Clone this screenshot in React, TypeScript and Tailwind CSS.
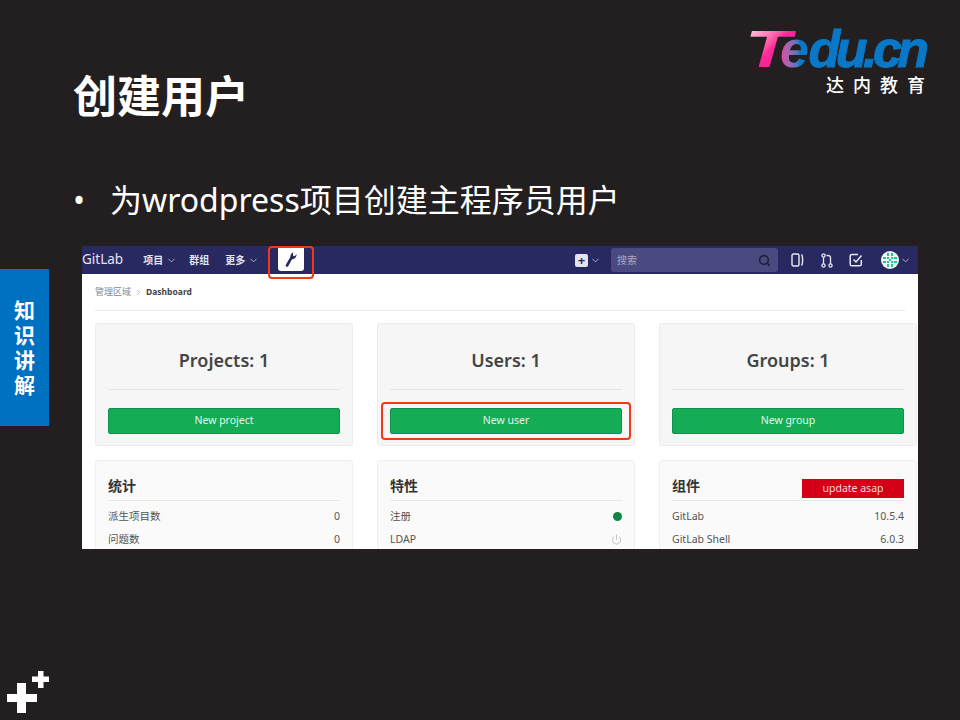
import { ChevronDown, ChevronRight, Power, Search } from "lucide-react";

const font = "font-['Noto_Sans','Noto_Sans_CJK_SC',sans-serif]";

// Top summary card (Projects / Users / Groups)
const CountCard = ({ title, action }: { title: string; action: string }) => (
  <div className="h-[123px] w-[258px] shrink-0 rounded-[3px] border border-[#ececec] bg-[#f6f6f6] px-3">
    <div className="flex h-[66px] items-center justify-center border-b border-[#e5e5e5] pt-[6px] text-[18px] font-semibold leading-none text-[#444]">
      {title}
    </div>
    <div className="mt-[18px] flex h-[26px] items-center justify-center rounded-[2px] border border-[#109150] bg-[#14ad55] text-[10.5px] text-[#e4f5ea]">
      {action}
    </div>
  </div>
);

const Row = ({ label, children }: { label: string; children: React.ReactNode }) => (
  <div className="flex h-[23px] items-center justify-between text-[10.5px] text-[#555]">
    <span>{label}</span>
    {children}
  </div>
);

const InfoCard = ({ title, badge, children }: { title: string; badge?: string; children: React.ReactNode }) => (
  <div className="h-[110px] w-[258px] shrink-0 rounded-[3px] border border-[#efefef] bg-[#fafafa] px-3">
    <div className="mt-[14px] flex h-[26px] items-end justify-between border-b border-[#e8e8e8] pb-[2px]">
      <span className="mb-[5px] text-[14px] font-bold leading-none text-[#333]">{title}</span>
      {badge && (
        <span className="flex h-[19px] w-[102px] items-center justify-center bg-[#d40018] text-[10.5px] text-[#f6d8da]">
          {badge}
        </span>
      )}
    </div>
    <div className="pt-[4px]">{children}</div>
  </div>
);

const Identicon = () => (
  <svg width="18" height="18" viewBox="0 0 18 18">
    <circle cx="9" cy="9" r="9" fill="#f1f5f3" />
    <path d="M6 2h2v3H6zM10 2h2v3h-2zM2 6h3v2H2zM13 6h3v2h-3zM2 10h3v2H2zM13 10h3v2h-3zM6 13h2v3H6zM10 13h2v3h-2zM6 6h2v2H6zM10 6h2v2h-2zM6 10h2v2H6zM10 10h2v2h-2zM8 8h2v2H8z" fill="#27c497" />
  </svg>
);

export default function App() {
  return (
    <div className={`relative h-[720px] w-[960px] overflow-hidden bg-[#231f20] ${font}`}>
      {/* Logo */}
      <div className="absolute left-[745px] top-[24px] w-[189px]">
        <div className="flex h-[50px] items-end font-['Liberation_Sans',sans-serif] text-[52px] font-bold italic leading-[50px] tracking-[-4.5px]">
          <span className="inline-block w-[35px] origin-left scale-x-[1.45] bg-gradient-to-br from-[#ffe6f3] via-[#ff2a9a] to-[#e0108a] bg-clip-text text-transparent">T</span>
          <span className="bg-gradient-to-r from-[#e83a9c] to-[#0a78c6] to-70% bg-clip-text pr-[4px] text-transparent">e</span>
          <span className="text-[#0a78c6] [-webkit-text-stroke:1px_#0a78c6]">du.cn</span>
        </div>
        <div className="mt-0 text-right text-[18px] font-medium leading-[22px] tracking-[9px] text-white">达内教育</div>
      </div>

      {/* Side tab */}
      <div className="absolute left-0 top-[269px] flex h-[157px] w-[49px] flex-col items-center justify-center bg-[#0070c0] text-[21px] font-bold leading-[25px] text-white">
        <span>知</span>
        <span>识</span>
        <span>讲</span>
        <span>解</span>
      </div>

      {/* Corner mark */}
      <svg className="absolute left-[7px] top-[671px]" width="42" height="42" viewBox="0 0 42 42">
        <path d="M10 12h9v11h11v8H19v11h-9V31H0v-8h10z" fill="#fff" />
        <path d="M31 0h5.500v5.500h5.500v5.500h-5.500v6h-5.500v-6h-6V5.500h6z" fill="#fff" />
      </svg>

      <div className="pl-[73px] pt-[66px]">
        <h1 className="text-[44px] font-bold leading-[60px] text-white">创建用户</h1>
        <div className="mt-[49px] flex h-[50px] items-center text-[32px] leading-none text-white">
          <span className="w-[37px]">•</span>
          <span>为wrodpress项目创建主程序员用户</span>
        </div>

        {/* GitLab admin screenshot */}
        <div className="relative ml-[9px] mt-[21px] h-[303px] w-[836px] overflow-hidden bg-white">
          <div className="flex h-[28px] items-center bg-[#292961] pr-[7px] text-[#e3e3ee]">
            <span className="text-[13.5px] leading-none">GitLab</span>
            <span className="ml-[20px] flex items-center gap-[3px] text-[10px] font-semibold">项目 <ChevronDown size={11} strokeWidth={1.5} /></span>
            <span className="ml-[12px] text-[10px] font-semibold">群组</span>
            <span className="ml-[16px] flex items-center gap-[3px] text-[10px] font-semibold">更多 <ChevronDown size={11} strokeWidth={1.5} /></span>
            <span className="ml-[19px] flex h-[25px] w-[26px] items-center justify-center self-start rounded-b-[3px] bg-white">
              <svg width="14" height="16" viewBox="0 0 14 16">
                <path d="M3 14.5 L7.2 7.2" stroke="#292961" strokeWidth="2.6" strokeLinecap="round" fill="none" />
                <path d="M6.4 7.6 C5.8 4.5 7 2.2 9.3 1.2 L8.9 4.6 L10.6 5.3 L12.6 3.2 C12.8 6 10.6 8.4 7.4 8.4 Z" fill="#292961" />
              </svg>
            </span>

            <span className="ml-auto flex h-[13px] w-[13px] items-center justify-center rounded-[2px] bg-[#e3e3f2] text-[13px] font-bold leading-none text-[#292961]">+</span>
            <ChevronDown className="ml-[2px]" size={11} strokeWidth={1.5} />
            <div className="ml-[10px] flex h-[24px] w-[167px] items-center justify-between rounded-[3px] bg-[#4a4a80] pl-[6px] pr-[7px] text-[10px] text-[#a9a9c8]">
              <span>搜索</span>
              <Search size={13} strokeWidth={3} className="text-[#1f1f3a]" />
            </div>
            <svg className="ml-[13px]" width="13" height="14" viewBox="0 0 13 14" fill="none" stroke="#e8e8f2" strokeWidth="1.4">
              <rect x="1" y="1" width="7" height="12" rx="1.5" />
              <path d="M10.5 1.5 C12 3 12 11 10.5 12.5" />
            </svg>
            <svg className="ml-[17px]" width="12" height="15" viewBox="0 0 12 15" fill="none" stroke="#e8e8f2" strokeWidth="1.3">
              <circle cx="2.5" cy="2.5" r="1.6" />
              <circle cx="2.5" cy="12.5" r="1.6" />
              <circle cx="9.5" cy="12.5" r="1.6" />
              <path d="M2.5 4.2v6.6M9.5 10.8V4.5C9.5 3 8.5 2.5 7 2.5H5.5" />
            </svg>
            <svg className="ml-[16px]" width="14" height="14" viewBox="0 0 14 14" fill="none" stroke="#e8e8f2" strokeWidth="1.5">
              <path d="M9 1.5H3C2 1.5 1.2 2.2 1.2 3.2v8c0 1 .8 1.6 1.8 1.6h7.5c1 0 1.8-.6 1.8-1.6V7" />
              <path d="M4.5 6.5 L7 9 L12.5 2.5" />
            </svg>
            <span className="ml-[18px]"><Identicon /></span>
            <ChevronDown className="ml-[1px]" size={11} strokeWidth={1.5} />
          </div>

          <div className="mx-[13px] flex h-[37px] items-center gap-[3px] border-b border-[#e8e8e8] text-[9px] text-[#8a8a8a]">
            <span>管理区域</span>
            <ChevronRight size={9} strokeWidth={1.5} />
            <span className="text-[8.5px] font-bold text-[#444]">Dashboard</span>
          </div>

          <div className="ml-[13px] mt-[12px] flex gap-[24px]">
            <CountCard title="Projects: 1" action="New project" />
            <CountCard title="Users: 1" action="New user" />
            <CountCard title="Groups: 1" action="New group" />
          </div>

          <div className="ml-[13px] mt-[14px] flex gap-[24px]">
            <InfoCard title="统计">
              <Row label="派生项目数"><span>0</span></Row>
              <Row label="问题数"><span>0</span></Row>
            </InfoCard>
            <InfoCard title="特性">
              <Row label="注册"><span className="h-[9px] w-[9px] rounded-full bg-[#108548]" /></Row>
              <Row label="LDAP"><Power size={11} strokeWidth={2} className="text-[#bbb]" /></Row>
            </InfoCard>
            <InfoCard title="组件" badge="update asap">
              <Row label="GitLab"><span>10.5.4</span></Row>
              <Row label="GitLab Shell"><span>6.0.3</span></Row>
            </InfoCard>
          </div>

          {/* Red highlight boxes from the slide */}
          <div className="absolute left-[186px] top-0 h-[33px] w-[46px] rounded-[4px] border-2 border-[#f03a17]" />
          <div className="absolute left-[299px] top-[156px] h-[38px] w-[250px] rounded-[4px] border-2 border-[#f03a17]" />
        </div>
      </div>
    </div>
  );
}
